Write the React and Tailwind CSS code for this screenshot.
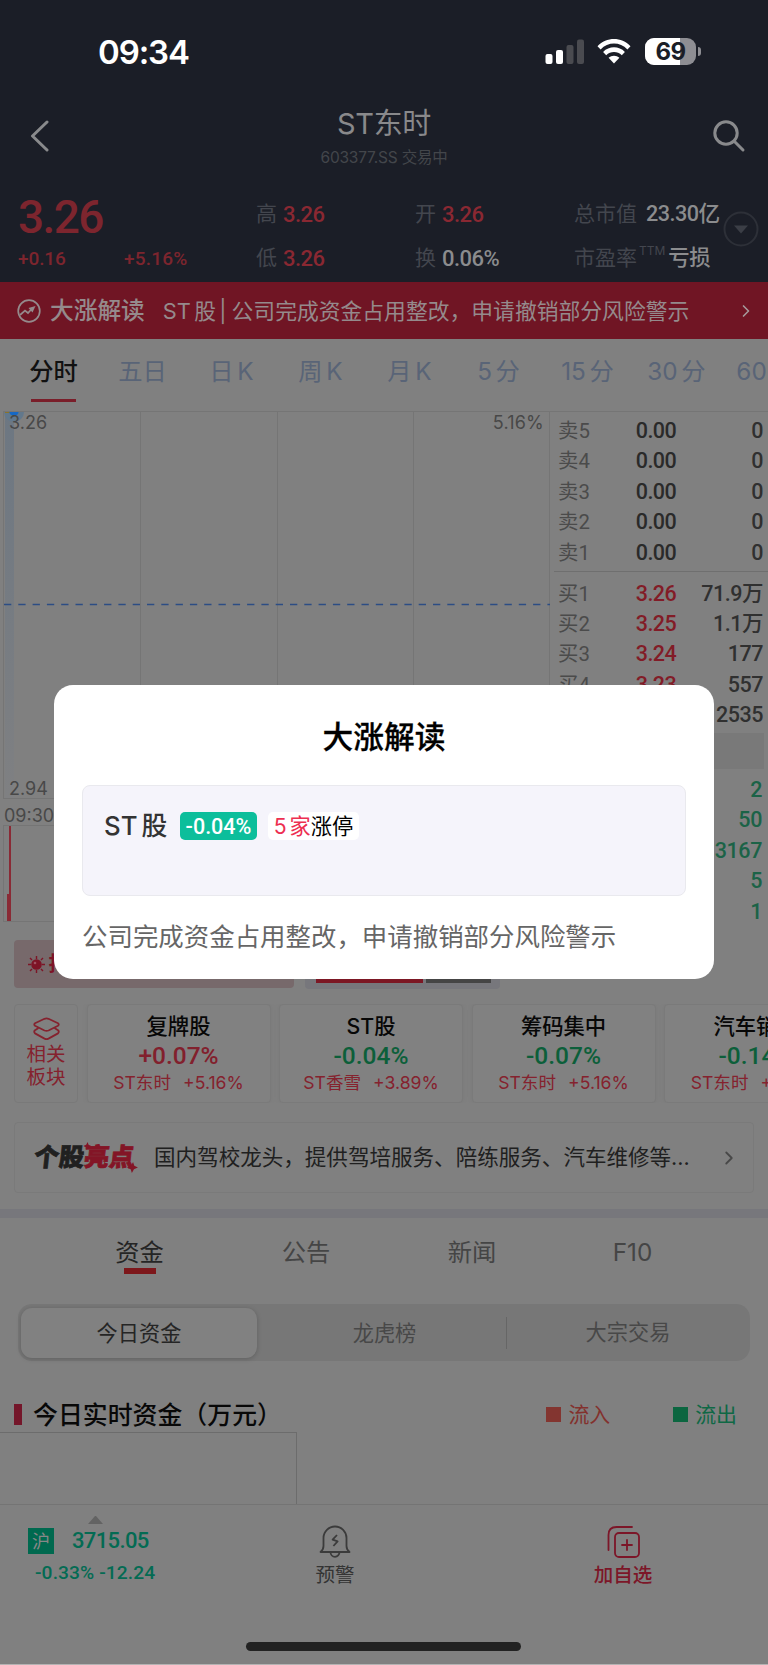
import { ChevronRight } from "lucide-react";

const periods = ["五日", "日 K", "周 K", "月 K", "5 分", "15 分", "30 分", "60 分"];

const sells = ["卖5", "卖4", "卖3", "卖2", "卖1"];

const buys = [
  { label: "买1", price: "3.26", amount: "71.9万" },
  { label: "买2", price: "3.25", amount: "1.1万" },
  { label: "买3", price: "3.24", amount: "177" },
  { label: "买4", price: "3.23", amount: "557" },
  { label: "买5", price: "3.22", amount: "2535" },
];

const trades = ["2", "50", "3167", "5", "1"];

const sectors = [
  { name: "复牌股", change: "+0.07%", up: true, stock: "ST东时", stockChange: "+5.16%" },
  { name: "ST股", change: "-0.04%", up: false, stock: "ST香雪", stockChange: "+3.89%" },
  { name: "筹码集中", change: "-0.07%", up: false, stock: "ST东时", stockChange: "+5.16%" },
  { name: "汽车销售", change: "-0.14%", up: false, stock: "ST东时", stockChange: "+5.16%" },
];

function StatusBar() {
  return (
    <div className="h-[104px] flex justify-between pl-[98px] pr-[67px] pt-[32px]">
      <span className="text-[33px] leading-[41px] font-semibold text-white tracking-[-1.1px]">
        09:34
      </span>
      <div className="flex items-start pt-[6px]">
        <svg className="w-[40px] h-[26px] mt-[1px]" viewBox="0 0 40 26">
          <rect x="0.5" y="15" width="7" height="10" rx="2" fill="#fff" />
          <rect x="11" y="11" width="7" height="14" rx="2" fill="#fff" />
          <rect x="21.5" y="6" width="7" height="19" rx="2" fill="#4a4b50" />
          <rect x="32" y="0.5" width="7" height="24.5" rx="2" fill="#4a4b50" />
        </svg>
        <svg className="w-[34px] h-[26px] ml-[12px] mr-[1px]" viewBox="0 0 34 26">
          <path d="M0.5 8.2C9.5 -1.5 24.5 -1.5 33.5 8.2L30.4 11.4C23 3.6 11 3.6 3.6 11.4Z" fill="#fff" />
          <path d="M6.1 14C12 7.8 22 7.8 27.9 14L24.8 17.2C20.5 12.8 13.5 12.8 9.2 17.2Z" fill="#fff" />
          <path d="M17 25.5L11.6 19.8C14.5 16.9 19.5 16.9 22.4 19.8Z" fill="#fff" />
        </svg>
        <div className="relative ml-[13px] w-[51px] h-[27px] rounded-[9px] overflow-hidden bg-[#8e8e93] flex items-center justify-center">
          <div className="absolute left-0 top-0 w-[35px] h-full bg-white" />
          <span className="relative text-[24px] leading-[27px] font-bold text-[#1b1e27] tracking-[-0.5px]">
            69
          </span>
        </div>
        <div className="w-[3px] h-[9px] mt-[9px] ml-[2px] rounded-r-full bg-[#8e8e93]" />
      </div>
    </div>
  );
}

function Quote({ label, value, className, valueClass }) {
  return (
    <div className={`flex items-center h-[44px] ${className || ""}`}>
      <span className="text-[21px] text-[#43464e]">{label}</span>
      <span
        className={`font-medium font-[Roboto,'Noto_Sans_CJK_SC',sans-serif] tracking-[-0.5px] ${valueClass}`}
      >
        {value}
      </span>
    </div>
  );
}

function Header() {
  return (
    <header className="h-[282px] bg-[#1b1e27]">
      <StatusBar />
      <div className="h-[84px] flex justify-between">
        <svg className="w-[20px] h-[32px] ml-[30px] mr-[6px] mt-[16px]" viewBox="0 0 20 32" fill="none" stroke="#898a8c" strokeWidth="3" strokeLinecap="round" strokeLinejoin="round">
          <path d="M17 2L2.5 16L17 30" />
        </svg>
        <div className="text-center">
          <div className="text-[29px] leading-[40px] text-[#89898b] tracking-[-0.3px]">ST东时</div>
          <div className="mt-[3px] text-[15.5px] leading-[22px] text-[#43464b] tracking-[-0.2px]">603377.SS 交易中</div>
        </div>
        <svg className="w-[34px] h-[34px] mr-[22px] mt-[15px]" viewBox="0 0 34 34" fill="none" stroke="#898a8c" strokeWidth="3" strokeLinecap="round">
          <circle cx="14" cy="14" r="11.2" />
          <path d="M22.5 22.5L31 31" />
        </svg>
      </div>
      <div className="flex h-[94px]">
        <div className="w-[256px] pl-[18px] text-[#7d252e] font-[Roboto] font-medium">
          <div className="text-[46px] leading-[59px] tracking-[-1.6px]">3.26</div>
          <div className="flex text-[19px] leading-[23px]">
            <span className="w-[106px] tracking-[-0.1px]">+0.16</span>
            <span className="tracking-[0.2px]">+5.16%</span>
          </div>
        </div>
        <div className="w-[159px] pt-[4px]">
          <Quote label="高" value="3.26" valueClass="ml-[6px] text-[22px] text-[#8a2832]" />
          <Quote label="低" value="3.26" valueClass="ml-[6px] text-[22px] text-[#8a2832]" />
        </div>
        <div className="w-[159px] pt-[4px]">
          <Quote label="开" value="3.26" valueClass="ml-[6px] text-[22px] text-[#8a2832]" />
          <Quote label="换" value="0.06%" valueClass="ml-[6px] text-[22px] text-[#8b8c8e]" />
        </div>
        <div className="w-[149px] pt-[4px] whitespace-nowrap">
          <Quote label="总市值" value="23.30亿" valueClass="ml-[9px] text-[21.6px] text-[#8b8c8e]" />
          <Quote
            label={
              <>
                市盈率<sup className="text-[12px] -top-[10px] ml-[2px]">TTM</sup>
              </>
            }
            value="亏损"
            valueClass="ml-[3px] text-[21.3px] text-[#8b8c8e]"
          />
        </div>
        <svg className="w-[36px] h-[36px] mt-[23px] shrink-0" viewBox="0 0 36 36">
          <circle cx="18" cy="18" r="16.5" fill="none" stroke="#2d3038" strokeWidth="2" />
          <path d="M11 14.5H25L18 22.5Z" fill="#3b3e46" />
        </svg>
      </div>
    </header>
  );
}

function Banner() {
  return (
    <div className="h-[57px] bg-[#701524] flex items-center pt-[1px] text-[#958a8c] whitespace-nowrap">
      <svg className="w-[24px] h-[24px] ml-[17px]" viewBox="0 0 24 24" fill="none" stroke="#958a8c" strokeWidth="1.7">
        <circle cx="12" cy="12" r="10.8" />
        <path d="M3 16L8 11.5L11 14L15 9.5" />
        <path d="M11.5 9L18.5 7L15.5 13.5Z" fill="#958a8c" stroke="none" />
      </svg>
      <span className="ml-[9px] text-[23.7px] font-medium">大涨解读</span>
      <span className="ml-[18px] text-[21.8px] [word-spacing:-2.8px]">ST 股 |</span>
      <span className="ml-[5px] text-[21.8px]">公司完成资金占用整改，申请撤销部分风险警示</span>
      <ChevronRight className="ml-auto mr-[12px] text-[#a5999b]" size={20} strokeWidth={2} />
    </div>
  );
}

function Periods() {
  return (
    <div className="h-[72px] flex pl-[9px] overflow-hidden text-[24.3px] text-[#596477] whitespace-nowrap">
      <div className="w-[89px] shrink-0 flex flex-col items-center">
        <span className="h-[60px] leading-[65px] font-medium text-[#111]">分时</span>
        <div className="w-[45px] h-[3px] bg-[#7a1e2a]" />
      </div>
      {periods.map((p) => (
        <span key={p} className="w-[89px] shrink-0 text-center leading-[65px] [word-spacing:-3.2px]">
          {p}
        </span>
      ))}
    </div>
  );
}

function Chart() {
  return (
    <div className="w-[550px] shrink-0 text-[18px] text-[#484848]">
      <div className="relative ml-[3px] h-[388px] border border-[#757575] grid grid-cols-4">
        <div />
        <div className="border-l border-[#757575]" />
        <div className="border-l border-[#757575]" />
        <div className="border-l border-[#757575]" />
        <svg className="absolute left-0 top-0 w-[547px] h-[386px]" viewBox="0 0 547 386">
          <defs>
            <linearGradient id="area" x1="0" y1="0" x2="0" y2="1">
              <stop offset="0" stopColor="#6d7782" />
              <stop offset="1" stopColor="#7f8082" />
            </linearGradient>
            <clipPath id="plot">
              <rect width="547" height="386" />
            </clipPath>
          </defs>
          <rect x="1" y="0" width="9" height="386" fill="url(#area)" />
          <g clipPath="url(#plot)">
            <circle cx="10" cy="0" r="10" fill="#62788c" />
            <rect x="1" y="-1" width="6" height="2" fill="#8c7327" />
            <circle cx="10" cy="-1" r="4.8" fill="#1668c4" />
          </g>
          <path d="M0 192.5H546" stroke="#2c4d84" strokeWidth="1.4" strokeDasharray="7.3 7" />
        </svg>
        <span className="absolute left-[5px] top-0 leading-[21px]">3.26</span>
        <span className="absolute right-[5px] top-0 leading-[21px] tracking-[0.2px]">5.16%</span>
        <span className="absolute left-[5px] bottom-0 leading-[19px]">2.94</span>
      </div>
      <div className="h-[26px] pl-[4px] leading-[33px]">09:30</div>
      <div className="ml-[3px] h-[97px] border border-[#757575] flex items-end pl-[3px]">
        <div className="w-[2px] h-[27px] bg-[#8a2a35]" />
        <div className="w-[2px] h-[95px] bg-[#8a2a35]" />
      </div>
    </div>
  );
}

function OrderRow({ label, price, amount, priceClass }) {
  return (
    <div className="flex h-[30.4px] leading-[30.4px]">
      <span className="w-[60px] text-[20.4px] text-[#4b4b4b]">{label}</span>
      <span className={`w-[58px] text-right font-medium tracking-[-0.6px] ${priceClass}`}>{price}</span>
      <span className="flex-1 text-right font-medium tracking-[-0.5px] text-[#303030]">{amount}</span>
    </div>
  );
}

function OrderBook() {
  return (
    <div className="flex-1 pl-[4px] border-t border-[#757575] text-[21.5px] font-[Roboto,'Noto_Sans_CJK_SC',sans-serif]">
      <div className="pl-[4px] pr-[5px] pt-[4px] h-[159px]">
        {sells.map((s) => (
          <OrderRow key={s} label={s} price="0.00" amount="0" priceClass="text-[#2a2a2a]" />
        ))}
      </div>
      <div className="h-px bg-[#6f6f6f]" />
      <div className="pl-[4px] pr-[5px] pt-[6.5px] h-[161px]">
        {buys.map((b) => (
          <OrderRow key={b.label} {...b} priceClass="text-[#821c27]" />
        ))}
      </div>
      <div className="mr-[4px] h-[36px] bg-[#797979]" />
      <div className="pr-[6px] pt-[6px]">
        {trades.map((t) => (
          <div key={t} className="h-[30.4px] leading-[30.4px] text-right font-medium tracking-[-0.4px] text-[#1b6347]">
            {t}
          </div>
        ))}
      </div>
    </div>
  );
}

function Ranking() {
  return (
    <div className="h-[66px] pt-[2px] flex items-start gap-[11px] pl-[13.5px]">
      <div className="w-[280px] h-[48px] rounded-[4px] bg-[#77696b] flex items-center pl-[14px] text-[#7d1426]">
        <svg className="w-[17px] h-[17px]" viewBox="0 0 17 17" stroke="#7d1426" strokeWidth="1.4">
          <circle cx="8.5" cy="8.5" r="5.3" fill="#7d1426" stroke="none" />
          <path d="M8.5 0V3M8.5 14V17M0 8.5H3M14 8.5H17M2 2L4 4M13 13L15 15M2 15L4 13M13 4L15 2" />
          <circle cx="7" cy="7" r="1.3" fill="#a05060" stroke="none" />
        </svg>
        <span className="ml-[4px] text-[20px] font-bold">抢先机</span>
      </div>
      <div className="w-[195px] h-[49px] rounded-[4px] bg-[#77777c] flex items-end gap-[3px] pl-[11px] pb-[6px]">
        <div className="w-[107px] h-[4px] bg-[#7c1724]" />
        <div className="w-[65px] h-[4px] bg-[#454545]" />
      </div>
    </div>
  );
}

function Sectors() {
  return (
    <div className="h-[99px] flex gap-[8.5px] pl-[14px] overflow-hidden whitespace-nowrap">
      <div className="w-[64px] shrink-0 rounded-[4px] border border-[#797979] flex flex-col items-center pt-[12px] text-[19.5px] leading-[23px] text-[#85222e]">
        <svg className="w-[27px] h-[24px] mb-[2px] shrink-0" viewBox="0 0 27 24" fill="none" stroke="#85222e" strokeWidth="1.8" strokeLinejoin="round">
          <path d="M11.5 1.8Q13.5 1 15.5 1.8L25 6.2Q26.5 7.5 25 8.8L15.5 13.5Q13.5 14.3 11.5 13.5L2 8.8Q0.5 7.5 2 6.2Z" />
          <path d="M5.5 11L2 13.2Q0.5 14.8 2 16.4L11.5 21.6Q13.5 22.6 15.5 21.6L25 16.4Q26.5 14.8 25 13.2L21.5 11" />
        </svg>
        <span>相关</span>
        <span>板块</span>
      </div>
      {sectors.map((s) => (
        <div
          key={s.name}
          className="w-[184px] shrink-0 rounded-[4px] border border-[#7a7a7a] bg-[#818181] shadow-[0_0_6px_rgba(0,0,0,0.05)] text-center pt-[7px]"
        >
          <div className="text-[21.3px] leading-[28px] font-medium text-[#070707]">{s.name}</div>
          <div
            className={`text-[24.5px] leading-[31px] font-medium font-[Roboto] ${
              s.up ? "text-[#82202d]" : "text-[#0c5f3a]"
            }`}
          >
            {s.change}
          </div>
          <div className="text-[17.6px] leading-[24px] text-[#85222e]">
            {s.stock}
            <span className="ml-[12px]">{s.stockChange}</span>
          </div>
        </div>
      ))}
    </div>
  );
}

function Highlight() {
  return (
    <div className="mt-[19px] mx-[14px] h-[71px] rounded-[4px] border border-[#7a7a7a] flex items-center pl-[19px] whitespace-nowrap">
      <div className="relative w-[104px] -skew-x-6 text-[25px] font-black text-[#202020] [-webkit-text-stroke:0.7px]">
        个股<span className="text-[#831526]">亮点</span>
        <svg className="absolute left-[48px] top-[3px] w-[8px] h-[8px]" viewBox="0 0 10 10" fill="#831526">
          <path d="M5 0L6.5 3.5L10 5L6.5 6.5L5 10L3.5 6.5L0 5L3.5 3.5Z" />
        </svg>
        <svg className="absolute left-[94px] top-[23px] w-[11px] h-[11px]" viewBox="0 0 10 10" fill="#831526">
          <path d="M5 0L6.5 3.5L10 5L6.5 6.5L5 10L3.5 6.5L0 5L3.5 3.5Z" />
        </svg>
      </div>
      <span className="ml-[16px] text-[21.55px] text-[#202020]">国内驾校龙头，提供驾培服务、陪练服务、汽车维修等...</span>
      <ChevronRight className="ml-auto mr-[13px] text-[#484848]" size={22} strokeWidth={2} />
    </div>
  );
}

function Funds() {
  return (
    <section className="mt-[16px] border-t-[9px] border-[#77777c]">
      <div className="h-[86px] pt-[13px] flex text-[24.3px] leading-[42px] text-[#454545]">
        <div className="w-[165px] ml-[57px] flex flex-col items-center text-[#252525]">
          资金
          <div className="-mt-[5px] w-[32px] h-[6px] bg-[#7d171b]" />
        </div>
        <div className="w-[168px] text-center">公告</div>
        <div className="w-[164px] text-center">新闻</div>
        <div className="w-[157px] text-center">F10</div>
      </div>
      <div className="mx-[18px] h-[57px] p-[3px] rounded-[14px] bg-[#777] flex items-center text-[21.2px] text-[#484848]">
        <div className="w-[236px] h-[50px] leading-[50px] rounded-[11px] bg-[#818181] shadow-[0_1px_5px_rgba(0,0,0,0.2)] text-center text-[#252525]">
          今日资金
        </div>
        <div className="w-[250px] h-[32px] leading-[32px] border-r border-[#666] text-center pl-[6px]">龙虎榜</div>
        <div className="flex-1 text-center pl-[2px]">大宗交易</div>
      </div>
      <div className="h-[71px] pl-[14px] pt-[36px] flex items-center whitespace-nowrap">
        <div className="w-[8px] h-[21px] bg-[#74162a]" />
        <span className="ml-[11px] text-[24.9px] leading-[34px] font-medium text-[#080808]">今日实时资金（万元）</span>
        <div className="ml-auto mr-[31px] flex items-center text-[20.9px] leading-[34px]">
          <div className="w-[15px] h-[15px] bg-[#833530]" />
          <span className="ml-[7px] text-[#83312d]">流入</span>
          <div className="ml-[63px] w-[15px] h-[15px] bg-[#0b6640]" />
          <span className="ml-[7px] text-[#0f6845]">流出</span>
        </div>
      </div>
      <div className="w-[297px] h-[72px] border-t border-r border-[#6c6c6c]" />
    </section>
  );
}

function BottomNav() {
  return (
    <nav className="relative h-[161px] border-t border-[#747474] flex text-[19.5px] leading-[26px]">
      <div className="w-[230px] pl-[28px] pt-[11px] text-[#046b53] font-[Roboto] font-medium">
        <div className="ml-[60px] w-[15px] border-x-[7px] border-b-[8px] border-x-transparent border-b-[#636363]" />
        <div className="mt-[4px] flex items-center text-[22px]">
          <span className="w-[26px] h-[26px] bg-[#00694f] text-[18px] leading-[25px] text-center text-[#878787] font-normal font-['Noto_Sans_CJK_SC']">
            沪
          </span>
          <span className="ml-[18px] tracking-[-0.65px]">3715.05</span>
        </div>
        <div className="mt-[6px] pl-[7px] text-[19.2px] tracking-[0.1px]">-0.33% -12.24</div>
      </div>
      <div className="w-[210px] flex flex-col items-center pt-[20px] text-[#343434]">
        <svg className="w-[32px] h-[34px]" viewBox="0 0 32 34" fill="none" stroke="#3b3b3b" strokeWidth="1.8" strokeLinejoin="round">
          <path d="M1.5 27H30.5Q27.5 24.5 27.5 21V13A11.5 11.5 0 0 0 4.5 13V21Q4.5 24.5 1.5 27Z" />
          <path d="M11.5 27A4.5 4.8 0 0 0 20.5 27" />
          <path d="M18 10L13.6 14.6L18.6 16.4L14.4 21" />
        </svg>
        <span className="mt-[3px]">预警</span>
      </div>
      <div className="flex-1 flex flex-col items-center pt-[20px] text-[#7c1628]">
        <svg className="w-[33px] h-[34px] ml-[38px]" viewBox="0 0 33 34" fill="none" stroke="#7c1628" strokeWidth="1.8" strokeLinecap="round">
          <path d="M1.5 25V10Q1.5 2 9.5 2H25" />
          <rect x="8" y="8" width="24" height="24" rx="4" />
          <path d="M20 15V25M15 20H25" />
        </svg>
        <span className="mt-[3px] ml-[38px] font-medium">加自选</span>
      </div>
      <div className="absolute left-[246px] bottom-[14px] w-[275px] h-[9px] rounded-full bg-[#222]" />
      <div className="absolute left-0 bottom-0 w-full h-px bg-[#b5b3b3]" />
    </nav>
  );
}

function RiseDialog() {
  return (
    <div className="absolute left-[54px] top-[685px] w-[660px] h-[294px] rounded-[19px] bg-white px-[28px]">
      <h2 className="h-[100px] leading-[103px] text-center text-[30.7px] font-medium text-black [-webkit-text-stroke:0.3px]">
        大涨解读
      </h2>
      <div className="h-[111px] rounded-[8px] border border-[#e9e9ee] bg-[#f5f4fb] flex items-start pt-[26px] pl-[21px] whitespace-nowrap">
        <span className="w-[64px] text-[25.8px] leading-[28px] font-medium text-[#333] [word-spacing:-3px]">ST 股</span>
        <span className="ml-[12px] w-[77px] h-[28px] leading-[30px] rounded-[5px] bg-[#0cbe9b] text-center text-[21.5px] font-medium font-[Roboto] text-white">
          -0.04%
        </span>
        <span className="ml-[11px] w-[91px] h-[28px] leading-[28px] rounded-[5px] bg-white text-center text-[21.2px] text-black [word-spacing:-3px]">
          <span className="text-[#ed2f51]">5 家</span>涨停
        </span>
      </div>
      <p className="mt-[21px] leading-[40px] text-[25.45px] text-[#666] whitespace-nowrap">
        公司完成资金占用整改，申请撤销部分风险警示
      </p>
    </div>
  );
}

function App() {
  return (
    <div className="relative w-[768px] h-[1665px] overflow-hidden bg-[#808080] font-[Inter,'Noto_Sans_CJK_SC',sans-serif]">
      <Header />
      <Banner />
      <Periods />
      <div className="h-[527px] flex">
        <Chart />
        <OrderBook />
      </div>
      <Ranking />
      <Sectors />
      <Highlight />
      <Funds />
      <BottomNav />
      <RiseDialog />
    </div>
  );
}

export default App;
